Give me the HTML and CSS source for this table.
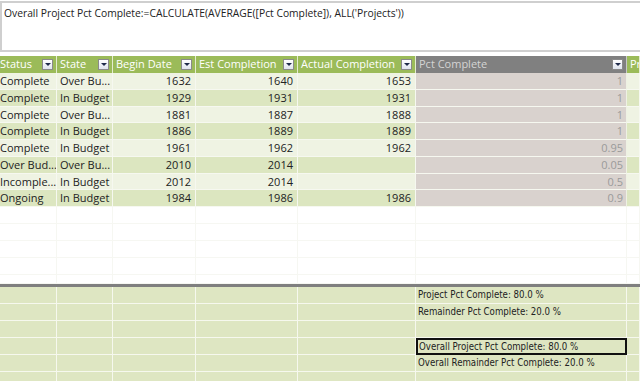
FILE: index.html
```html
<!DOCTYPE html>
<html>
<head>
<meta charset="utf-8">
<link rel="stylesheet" href="styles.css">
</head>
<body>
<div class="formula">Overall Project Pct Complete:=CALCULATE(AVERAGE([Pct Complete]), ALL('Projects'))</div>
<div class="grid">
  <div class="row head">
    <div class="c first">Status<span class="dd"></span></div>
    <div class="c">State<span class="dd"></span></div>
    <div class="c">Begin Date<span class="dd"></span></div>
    <div class="c">Est Completion<span class="dd"></span></div>
    <div class="c">Actual Completion<span class="dd"></span></div>
    <div class="c sel">Pct Complete<span class="dd"></span></div>
    <div class="c">Pr</div>
  </div>
  <div class="row odd"><div class="c first">Complete</div><div class="c">Over Bu...</div><div class="c num">1632</div><div class="c num">1640</div><div class="c num">1653</div><div class="c pct">1</div><div class="c"></div></div>
  <div class="row even"><div class="c first">Complete</div><div class="c">In Budget</div><div class="c num">1929</div><div class="c num">1931</div><div class="c num">1931</div><div class="c pct">1</div><div class="c"></div></div>
  <div class="row odd"><div class="c first">Complete</div><div class="c">Over Bu...</div><div class="c num">1881</div><div class="c num">1887</div><div class="c num">1888</div><div class="c pct">1</div><div class="c"></div></div>
  <div class="row even"><div class="c first">Complete</div><div class="c">In Budget</div><div class="c num">1886</div><div class="c num">1889</div><div class="c num">1889</div><div class="c pct">1</div><div class="c"></div></div>
  <div class="row odd"><div class="c first">Complete</div><div class="c">In Budget</div><div class="c num">1961</div><div class="c num">1962</div><div class="c num">1962</div><div class="c pct">0.95</div><div class="c"></div></div>
  <div class="row even"><div class="c first">Over Bud...</div><div class="c">Over Bu...</div><div class="c num">2010</div><div class="c num">2014</div><div class="c num"></div><div class="c pct">0.05</div><div class="c"></div></div>
  <div class="row odd"><div class="c first">Incomple...</div><div class="c">In Budget</div><div class="c num">2012</div><div class="c num">2014</div><div class="c num"></div><div class="c pct">0.5</div><div class="c"></div></div>
  <div class="row even"><div class="c first">Ongoing</div><div class="c">In Budget</div><div class="c num">1984</div><div class="c num">1986</div><div class="c num">1986</div><div class="c pct">0.9</div><div class="c"></div></div>
  <div class="row empty"><div class="c"></div><div class="c"></div><div class="c"></div><div class="c"></div><div class="c"></div><div class="c"></div><div class="c"></div></div>
  <div class="row empty"><div class="c"></div><div class="c"></div><div class="c"></div><div class="c"></div><div class="c"></div><div class="c"></div><div class="c"></div></div>
  <div class="row empty"><div class="c"></div><div class="c"></div><div class="c"></div><div class="c"></div><div class="c"></div><div class="c"></div><div class="c"></div></div>
  <div class="row empty"><div class="c"></div><div class="c"></div><div class="c"></div><div class="c"></div><div class="c"></div><div class="c"></div><div class="c"></div></div>
  <div class="row empty last"><div class="c"></div><div class="c"></div><div class="c"></div><div class="c"></div><div class="c"></div><div class="c"></div><div class="c"></div></div>
</div>
<div class="measures">
  <div class="row m"><div class="c"></div><div class="c"></div><div class="c"></div><div class="c"></div><div class="c"></div><div class="c mt">Project Pct Complete: 80.0 %</div><div class="c"></div></div>
  <div class="row m"><div class="c"></div><div class="c"></div><div class="c"></div><div class="c"></div><div class="c"></div><div class="c mt">Remainder Pct Complete: 20.0 %</div><div class="c"></div></div>
  <div class="row m"><div class="c"></div><div class="c"></div><div class="c"></div><div class="c"></div><div class="c"></div><div class="c mt"></div><div class="c"></div></div>
  <div class="row m"><div class="c"></div><div class="c"></div><div class="c"></div><div class="c"></div><div class="c"></div><div class="c mt active">Overall Project Pct Complete: 80.0 %</div><div class="c"></div></div>
  <div class="row m"><div class="c"></div><div class="c"></div><div class="c"></div><div class="c"></div><div class="c"></div><div class="c mt">Overall Remainder Pct Complete: 20.0 %</div><div class="c"></div></div>
  <div class="row m"><div class="c"></div><div class="c"></div><div class="c"></div><div class="c"></div><div class="c"></div><div class="c mt"></div><div class="c"></div></div>
</div>
</body>
</html>
```
FILE: styles.css
```css
* { box-sizing: border-box; }
html, body { margin: 0; padding: 0; background: #fff; overflow: hidden; }
body {
  width: 640px;
  height: 381px;
  font-family: "Open Sans", "Noto Sans", sans-serif;
  font-size: 11px;
  color: #222;
}
.formula {
  margin-top: 1px;
  height: 51px;
  border: 2px solid #cfcfcf;
  border-right: none;
  padding: 3px 0 0 2px;
  font-size: 10.3px;
  line-height: 14px;
  color: #222;
  white-space: nowrap;
}
.grid { margin-top: 4px; }
.row {
  display: grid;
  grid-template-columns: 57px 56px 83px 102px 118px 211px 13px;
  height: 17px;
}
.c {
  border-right: 1px solid #f6f8f0;
  border-bottom: 1px solid #f6f8f0;
  padding: 0 3px;
  line-height: 16px;
  white-space: nowrap;
  overflow: hidden;
  position: relative;
}
.c.first { padding-left: 0; }
.head .c {
  background: #9bbb59;
  color: #fff;
  border-right: 1px solid #e4ecd0;
  border-bottom: none;
}
.head .c.sel { background: #808080; color: #d4d4d4; border-right: 1px solid #c8c8c8; }
.dd {
  position: absolute;
  right: 3px;
  top: 3px;
  width: 11px;
  height: 11px;
  border: 1px solid #8a8a8a;
  background: linear-gradient(#ffffff, #dfe4ee);
}
.dd::after {
  content: "";
  position: absolute;
  left: 2px;
  top: 3px;
  border-left: 3px solid transparent;
  border-right: 3px solid transparent;
  border-top: 3px solid #1e2a4a;
}
.row.odd, .row.even { height: 16.75px; }
.odd .c { background: #eff3e3; }
.even .c { background: #dce6c0; }
.c.num { text-align: right; padding-right: 4px; }
.c.pct {
  background: #d9d2ce !important;
  color: #9a9a9a;
  text-align: right;
  padding-right: 3px;
  border-right: 1px solid #eef1e4;
}
.empty .c { background: #fff; border-color: #f6f7f2; }
.row.last { height: 9px; }
.measures {
  border-top: 3px solid #7f7f7f;
  margin-top: 0;
}
.m .c {
  background: #dee6c2;
  border-right: 1px solid #f6f8ee;
  border-bottom: 1px solid #f6f8ee;
}
.m .c.mt {
  font-family: "DejaVu Sans Condensed", "DejaVu Sans", sans-serif;
  font-size: 9.6px;
  color: #222;
  padding-left: 2px;
  border-right: 1px solid #f6f8ee;
}
.m .c.active { border: 2px solid #111; padding-left: 1px; line-height: 13px; }
```
